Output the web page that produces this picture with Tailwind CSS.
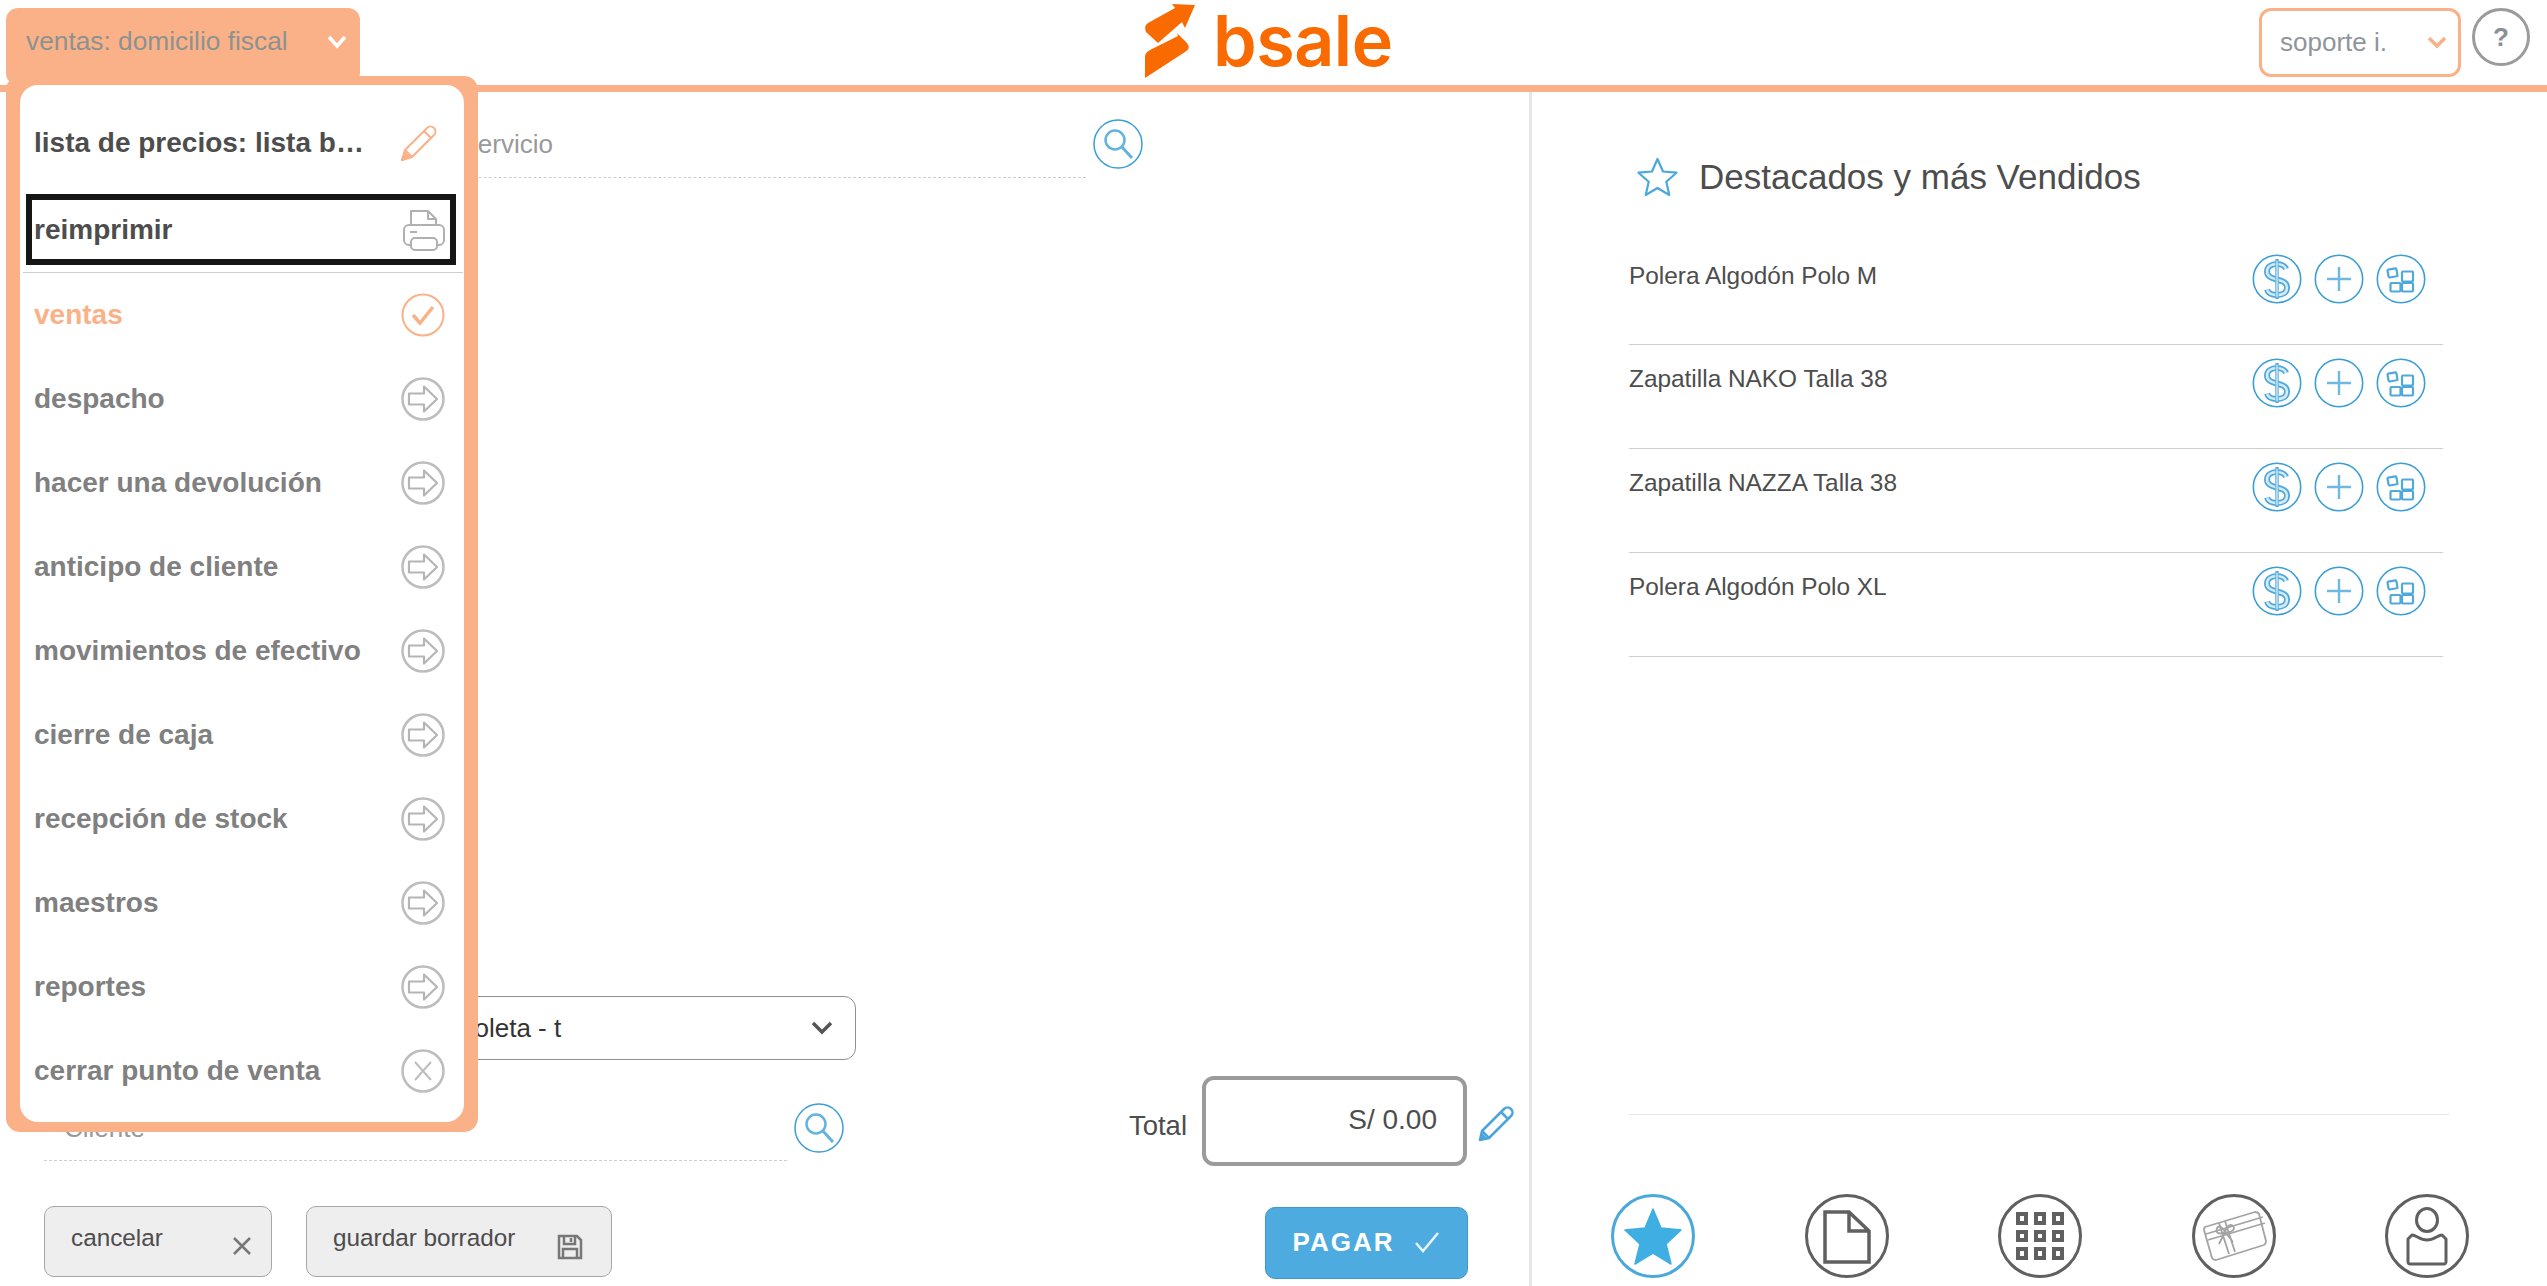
<!DOCTYPE html>
<html lang="en">
<head>
    <meta charset="UTF-8">
    <title>bsale punto de venta</title>
    <script src="https://cdn.jsdelivr.net/npm/@tailwindcss/browser@4"></script>
</head>
<body class="relative w-[2547px] h-[1286px] overflow-hidden bg-white font-['Liberation_Sans',Arial,sans-serif] text-[#4d4d4d]">

    <!-- shared icons -->
    <svg class="absolute w-0 h-0">
        <symbol id="arrow" viewBox="0 0 44 44">
            <circle cx="22" cy="22" r="20.500" fill="none" stroke="#bdbdbd" stroke-width="2.500"/>
            <path d="M8 16.500h15v-7l13 12.500-13 12.500v-7H8z" fill="none" stroke="#b5b5b5" stroke-width="2.200" stroke-linejoin="round"/>
        </symbol>
        <symbol id="dollar" viewBox="0 0 50 50">
            <circle cx="25" cy="25" r="23.700" fill="none" stroke="#3a9fd6" stroke-width="1.600"/>
            <path d="M34 15c-1-3-5-5-9-5-6 0-10 3-10 7.500 0 10.500 20 5.500 20 16 0 5-4 7.500-10 7.500-5 0-9-2-10-5.500" fill="none" stroke="#4fa9db" stroke-width="6"/>
            <path d="M34 15c-1-3-5-5-9-5-6 0-10 3-10 7.500 0 10.500 20 5.500 20 16 0 5-4 7.500-10 7.500-5 0-9-2-10-5.500" fill="none" stroke="#d5ebf7" stroke-width="2.500"/>
            <path d="M25 5v40" stroke="#5fb2df" stroke-width="3.500"/>
            <path d="M25 7v36" stroke="#e3f2fa" stroke-width="1.200"/>
        </symbol>
        <symbol id="plus" viewBox="0 0 50 50">
            <circle cx="25" cy="25" r="23.700" fill="none" stroke="#3a9fd6" stroke-width="1.600"/>
            <path d="M13 25h24M25 13v24" stroke="#6db9e2" stroke-width="2.400"/>
        </symbol>
        <symbol id="blocks" viewBox="0 0 50 50">
            <circle cx="25" cy="25" r="23.700" fill="none" stroke="#3a9fd6" stroke-width="1.600"/>
            <g fill="none" stroke="#4fa9db" stroke-width="2.200" stroke-linejoin="round">
                <rect x="12" y="15" width="9" height="8" rx="1" transform="rotate(-10 16 19)"/>
                <rect x="26" y="17.500" width="11" height="10" rx="1"/>
                <rect x="14.500" y="29" width="10" height="8.500" rx="1"/>
                <rect x="26" y="29" width="11" height="8.500" rx="1"/>
            </g>
        </symbol>
    </svg>

    <!-- header -->
    <header class="flex h-[92px] items-start border-b-[7px] border-[#fbb187]">
        <button class="ml-[6px] mt-[8px] flex h-[77px] w-[354px] items-start justify-between rounded-[12px] bg-[#fbb187] pl-[20px] pr-[13px] pt-[15px] text-left text-[26.300px] leading-[36px] text-[#8c9291]">
            ventas: domicilio fiscal
            <svg class="mt-[12px]" width="20" height="14" viewBox="0 0 20 14"><path d="M2 2l8 9 8-9" fill="none" stroke="#fff" stroke-width="3.500"/></svg>
        </button>

        <div class="ml-[785px] mt-[3px] flex items-start">
            <svg width="52" height="76" viewBox="0 0 52 76">
                <path d="M3 20L30 5l-3-4 23 1-10 23-3-6-24 21-12-11c-2-6 0-7 2-9z" fill="#f96a00"/>
                <path d="M32 30l10 10c3 5 2 6-2 9L0 75V55c0-5 2-6 5-8l28-14z" fill="#f96a00"/>
            </svg>
            <span class="ml-[16px] mt-[-4px] font-['Inter',sans-serif] text-[70px] font-semibold leading-[84px] tracking-[-0.5px] text-[#f96a00]">bsale</span>
        </div>

        <div class="ml-auto mr-[17px] mt-[8px] flex items-start gap-[11px]">
            <div class="flex h-[69px] w-[202px] items-center justify-between rounded-[12px] border-[3px] border-[#fbb187] pl-[18px] pr-[11px] text-[26px] text-[#8f959a]">
                soporte i.
                <svg width="20" height="13" viewBox="0 0 20 13"><path d="M2 2l8 8 8-8" fill="none" stroke="#fbb187" stroke-width="3.500"/></svg>
            </div>
            <div class="flex h-[58px] w-[58px] items-center justify-center rounded-full border-[3px] border-[#9b9b9b] text-[26px] font-bold text-[#8b8f94]">?</div>
        </div>
    </header>

    <main class="flex h-[1194px]">
        <!-- sale form -->
        <section class="flex w-[1532px] flex-col border-r-[3px] border-[#e6e6e6] pl-[44px] pr-[56px]">
            <div class="mt-[27px] flex items-start gap-[7px]">
                <div class="flex h-[59px] w-[1042px] items-center border-b border-dashed border-[#cfcfcf] pb-[8px] text-[26px] text-[#999]">
                    <span class="w-[509px] whitespace-nowrap text-right">Ingresa nombre de producto o servicio</span>
                </div>
                <svg class="h-[50px] w-[50px]" viewBox="0 0 50 50">
                    <circle cx="25" cy="25" r="24" fill="none" stroke="#3a9fd6" stroke-width="1.500"/>
                    <circle cx="22" cy="21" r="9.500" fill="none" stroke="#62b3df" stroke-width="2.500"/>
                    <path d="M29 28l10 11" stroke="#62b3df" stroke-width="3"/>
                </svg>
            </div>

            <div class="flex h-[64px] w-[812px] mt-[818px] items-center justify-between rounded-[12px] border border-[#8f8f8f] pl-[20px] pr-[22px] text-[26px] text-[#333]">
                <span class="ml-[395px]">boleta - t</span>
                <svg width="22" height="14" viewBox="0 0 22 14"><path d="M2 2l9 9 9-9" fill="none" stroke="#555" stroke-width="3.500"/></svg>
            </div>

            <div class="mt-[16px] flex h-[90px] items-start">
                <div class="mt-[27px] flex items-start gap-[7px]">
                    <div class="flex h-[58px] w-[743px] items-start border-b border-dashed border-[#cfcfcf] pl-[20px] text-[26px] leading-[50px] text-[#999]">Cliente</div>
                    <svg class="h-[50px] w-[50px]" viewBox="0 0 50 50">
                        <circle cx="25" cy="25" r="24" fill="none" stroke="#3a9fd6" stroke-width="1.500"/>
                        <circle cx="22" cy="21" r="9.500" fill="none" stroke="#62b3df" stroke-width="2.500"/>
                        <path d="M29 28l10 11" stroke="#62b3df" stroke-width="3"/>
                    </svg>
                </div>
                <div class="ml-auto mr-[-42px] flex items-start">
                    <span class="mt-[32px] text-[27.500px] leading-[36px]">Total</span>
                    <div class="ml-[15px] flex h-[90px] w-[265px] items-start justify-end rounded-[12px] border-[4px] border-[#9b9b9b] pr-[26px] pt-[22px] text-[28px] leading-[36px]">S/ 0.00</div>
                    <svg class="ml-[10px] mt-[29px]" width="38" height="38" viewBox="0 0 38 38">
                        <path d="M3 35l2-9L27 4c2-2 5-2 7 0s2 5 0 7L12 33z" fill="none" stroke="#4aa5da" stroke-width="2.500" stroke-linejoin="round"/>
                        <path d="M24 7l7 7M5 26l7 7" stroke="#4aa5da" stroke-width="2.500"/>
                        <path d="M3 35l2-7 5 5z" fill="#4aa5da"/>
                    </svg>
                </div>
            </div>

            <div class="mt-[40px] flex items-start">
                <button class="flex h-[71px] w-[228px] items-start justify-between rounded-[10px] border border-[#a6a6a6] bg-[#eeeeee] pl-[26px] pr-[19px] pt-[13px] text-[24.300px] leading-[36px]">
                    cancelar
                    <svg class="mt-[16px]" width="20" height="20" viewBox="0 0 20 20"><path d="M2 2l16 16M18 2L2 18" stroke="#777" stroke-width="2.500"/></svg>
                </button>
                <button class="ml-[34px] flex h-[71px] w-[306px] items-start justify-between rounded-[10px] border border-[#a6a6a6] bg-[#eeeeee] pl-[26px] pr-[28px] pt-[13px] text-[24.300px] leading-[36px]">
                    guardar borrador
                    <svg class="mt-[14px]" width="26" height="26" viewBox="0 0 26 26" fill="none" stroke="#777" stroke-width="2.500">
                        <path d="M2 2h18l4 4v18H2z"/><path d="M7 2v8h11V2M14 4v4M6 24v-9h14v9"/>
                    </svg>
                </button>
                <button class="ml-auto mr-[5px] mt-[1px] flex h-[72px] w-[203px] items-center justify-center gap-[20px] rounded-[10px] border border-[#3f97cc] bg-[#4dabdf] pb-[2px] text-[26px] font-bold tracking-[2px] text-white">
                    PAGAR
                    <svg width="26" height="22" viewBox="0 0 26 22"><path d="M2 12l7 8L24 2" fill="none" stroke="#e8f4fb" stroke-width="2.500"/></svg>
                </button>
            </div>
        </section>

        <!-- featured products -->
        <section class="flex flex-1 flex-col">
            <div class="ml-[105px] mt-[65px] flex items-center gap-[21px] text-[35px] leading-[40px]">
                <svg width="41" height="40" viewBox="0 0 41 40"><path d="M20.500 2l5.500 12.500 13.500 1.200-10.200 9 3 13.300-11.800-7-11.800 7 3-13.300-10.200-9L15 14.500z" fill="none" stroke="#4aa8dc" stroke-width="2.200" stroke-linejoin="round"/></svg>
                Destacados y más Vendidos
            </div>

            <ul class="ml-[97px] mt-[44px] w-[814px] text-[24.400px]">
                <li class="flex h-[104px] items-start justify-between border-b border-[#cfcfcf] pr-[17px] pt-[13px]">
                    <span class="mt-[4px]">Polera Algodón Polo M</span>
                    <div class="flex gap-[12px]">
                        <svg class="h-[50px] w-[50px]"><use href="#dollar"/></svg>
                        <svg class="h-[50px] w-[50px]"><use href="#plus"/></svg>
                        <svg class="h-[50px] w-[50px]"><use href="#blocks"/></svg>
                    </div>
                </li>
                <li class="flex h-[104px] items-start justify-between border-b border-[#cfcfcf] pr-[17px] pt-[13px]">
                    <span class="mt-[3px]">Zapatilla NAKO Talla 38</span>
                    <div class="flex gap-[12px]">
                        <svg class="h-[50px] w-[50px]"><use href="#dollar"/></svg>
                        <svg class="h-[50px] w-[50px]"><use href="#plus"/></svg>
                        <svg class="h-[50px] w-[50px]"><use href="#blocks"/></svg>
                    </div>
                </li>
                <li class="flex h-[104px] items-start justify-between border-b border-[#cfcfcf] pr-[17px] pt-[13px]">
                    <span class="mt-[3px]">Zapatilla NAZZA Talla 38</span>
                    <div class="flex gap-[12px]">
                        <svg class="h-[50px] w-[50px]"><use href="#dollar"/></svg>
                        <svg class="h-[50px] w-[50px]"><use href="#plus"/></svg>
                        <svg class="h-[50px] w-[50px]"><use href="#blocks"/></svg>
                    </div>
                </li>
                <li class="flex h-[104px] items-start justify-between border-b border-[#cfcfcf] pr-[17px] pt-[13px]">
                    <span class="mt-[3px]">Polera Algodón Polo XL</span>
                    <div class="flex gap-[12px]">
                        <svg class="h-[50px] w-[50px]"><use href="#dollar"/></svg>
                        <svg class="h-[50px] w-[50px]"><use href="#plus"/></svg>
                        <svg class="h-[50px] w-[50px]"><use href="#blocks"/></svg>
                    </div>
                </li>
            </ul>

            <div class="ml-[97px] mt-auto w-[820px] border-t border-[#e4e4e4]"></div>
            <nav class="ml-[79px] mb-[8px] mt-[79px] flex gap-[109.500px]">
                <svg class="h-[84px] w-[84px]" viewBox="0 0 84 84">
                    <circle cx="42" cy="42" r="40.500" fill="none" stroke="#4aa8dc" stroke-width="3"/>
                    <path d="M42 15l8 19 20 2-15 14 5 20-18-11-18 11 5-20-15-14 20-2z" fill="#3eaee3" stroke="#3eaee3" stroke-width="1.500" stroke-linejoin="round"/>
                </svg>
                <svg class="h-[84px] w-[84px]" viewBox="0 0 84 84" fill="none" stroke="#606060">
                    <circle cx="42" cy="42" r="40.500" stroke-width="3"/>
                    <path d="M20 18h24l20 19v31H20zM44 18v19h20" stroke-width="3.500"/>
                </svg>
                <svg class="h-[84px] w-[84px]" viewBox="0 0 84 84" fill="none" stroke="#606060">
                    <circle cx="42" cy="42" r="40.500" stroke-width="3"/>
                    <g stroke-width="4">
                        <rect x="20" y="20" width="8" height="9"/><rect x="38" y="20" width="8" height="9"/><rect x="56" y="20" width="8" height="9"/>
                        <rect x="20" y="38" width="8" height="8"/><rect x="38" y="38" width="8" height="8"/><rect x="56" y="38" width="8" height="8"/>
                        <rect x="20" y="55" width="8" height="9"/><rect x="38" y="55" width="8" height="9"/><rect x="56" y="55" width="8" height="9"/>
                    </g>
                </svg>
                <svg class="h-[84px] w-[84px]" viewBox="0 0 84 84" fill="none">
                    <circle cx="42" cy="42" r="40.500" stroke="#606060" stroke-width="3"/>
                    <g stroke="#a3a3a3" stroke-width="1.800" stroke-linejoin="round">
                        <path d="M13 33l50-15c2 0 3 0 4 2l7 27c0 2 0 3-2 4L24 66c-2 0-3 0-4-2l-8-28c0-1 0-2 1-3z"/>
                        <path d="M27 29l10 31M33 27l10 31M14 40l57-17M16 46l57-17"/>
                        <path d="M33 38c-4-8-10-6-8 0 1 2 5 2 8 0zm0 0c2-8 8-9 9-4 0 3-5 5-9 4zm0 0l-6 12m6-12l8 10"/>
                    </g>
                </svg>
                <svg class="h-[84px] w-[84px]" viewBox="0 0 84 84" fill="none" stroke="#606060">
                    <circle cx="42" cy="42" r="40.500" stroke-width="3"/>
                    <ellipse cx="42" cy="26" rx="10.500" ry="11.500" stroke-width="3"/>
                    <path d="M27 41c4 0 8 5 15 5s11-5 15-5l4 4v23c0 1-1 2-2 2H25c-1 0-2-1-2-2V45z" stroke-width="3" stroke-linejoin="round"/>
                </svg>
            </nav>
        </section>
    </main>

    <!-- open point-of-sale menu -->
    <div class="absolute left-[6px] top-[76px] h-[1056px] w-[472px] rounded-[14px] bg-[#fbb187] px-[14px] pb-[10px] pt-[9px]">
        <div class="h-full rounded-[18px] bg-white pt-[16px] text-[28px] font-bold text-[#808080]">
            <div class="flex h-[84px] items-center justify-between pl-[14px] pr-[26px] text-[#4d4d4d]">
                lista de precios: lista b…
                <svg width="38" height="38" viewBox="0 0 38 38" fill="none" stroke="#fbb187" stroke-width="2" stroke-linejoin="round">
                    <path d="M2 36l3-10L27 4c2-2 5-2 7 0s2 5 0 7L12 33z"/><path d="M24 7l7 7M5 26l7 7"/><path d="M2 36l3-7 4 4z" fill="#fbb187"/>
                </svg>
            </div>
            <div class="ml-[6px] mr-[8px] mt-[9px] flex h-[71px] items-center justify-between border-[6px] border-[#161616] pl-[2px] pr-[5px] text-[#4d4d4d]">
                reimprimir
                <svg width="42" height="42" viewBox="0 0 42 42" fill="none" stroke="#b0b0b0" stroke-width="2" stroke-linejoin="round">
                    <path d="M8 16V2h17l8 8v6M25 2v8h8"/><rect x="1" y="16" width="40" height="20" rx="5"/><rect x="8" y="29" width="26" height="12" rx="4" fill="#fff"/><path d="M7 23h7"/>
                </svg>
            </div>
            <div class="ml-[3px] mr-px mt-[7px] border-t border-[#cfcfcf]"></div>

            <div class="flex h-[84px] items-center justify-between pl-[14px] pr-[19px] text-[#fbb187]">
                ventas
                <svg class="h-[44px] w-[44px]" viewBox="0 0 44 44" fill="none" stroke="#fbb187">
                    <circle cx="22" cy="22" r="20.500" stroke-width="2"/><path d="M12 22l7 8 13-16" stroke-width="3.500"/>
                </svg>
            </div>
            <div class="flex h-[84px] items-center justify-between pl-[14px] pr-[19px]">despacho<svg class="h-[44px] w-[44px]"><use href="#arrow"/></svg></div>
            <div class="flex h-[84px] items-center justify-between pl-[14px] pr-[19px]">hacer una devolución<svg class="h-[44px] w-[44px]"><use href="#arrow"/></svg></div>
            <div class="flex h-[84px] items-center justify-between pl-[14px] pr-[19px]">anticipo de cliente<svg class="h-[44px] w-[44px]"><use href="#arrow"/></svg></div>
            <div class="flex h-[84px] items-center justify-between pl-[14px] pr-[19px]">movimientos de efectivo<svg class="h-[44px] w-[44px]"><use href="#arrow"/></svg></div>
            <div class="flex h-[84px] items-center justify-between pl-[14px] pr-[19px]">cierre de caja<svg class="h-[44px] w-[44px]"><use href="#arrow"/></svg></div>
            <div class="flex h-[84px] items-center justify-between pl-[14px] pr-[19px]">recepción de stock<svg class="h-[44px] w-[44px]"><use href="#arrow"/></svg></div>
            <div class="flex h-[84px] items-center justify-between pl-[14px] pr-[19px]">maestros<svg class="h-[44px] w-[44px]"><use href="#arrow"/></svg></div>
            <div class="flex h-[84px] items-center justify-between pl-[14px] pr-[19px]">reportes<svg class="h-[44px] w-[44px]"><use href="#arrow"/></svg></div>
            <div class="flex h-[84px] items-center justify-between pl-[14px] pr-[19px]">
                cerrar punto de venta
                <svg class="h-[44px] w-[44px]" viewBox="0 0 44 44" fill="none" stroke="#bdbdbd">
                    <circle cx="22" cy="22" r="20.500" stroke-width="2.500"/><path d="M14 13l16 18M30 13L14 31" stroke-width="2"/>
                </svg>
            </div>
        </div>
    </div>
</body>
</html>
